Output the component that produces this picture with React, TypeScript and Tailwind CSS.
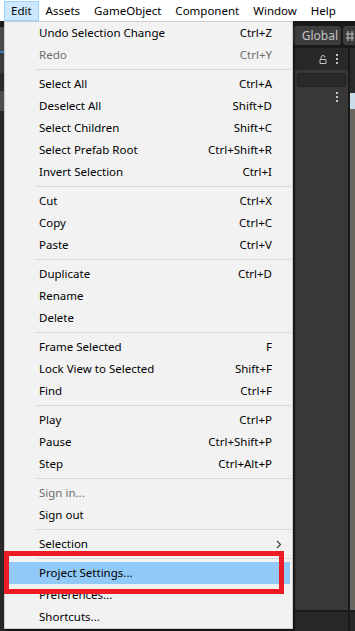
import React from "react";

type Item = { label: string; keys?: string; disabled?: boolean; sub?: boolean; active?: boolean };

const groups: Item[][] = [
  [
    { label: "Undo Selection Change", keys: "Ctrl+Z" },
    { label: "Redo", keys: "Ctrl+Y", disabled: true },
  ],
  [
    { label: "Select All", keys: "Ctrl+A" },
    { label: "Deselect All", keys: "Shift+D" },
    { label: "Select Children", keys: "Shift+C" },
    { label: "Select Prefab Root", keys: "Ctrl+Shift+R" },
    { label: "Invert Selection", keys: "Ctrl+I" },
  ],
  [
    { label: "Cut", keys: "Ctrl+X" },
    { label: "Copy", keys: "Ctrl+C" },
    { label: "Paste", keys: "Ctrl+V" },
  ],
  [
    { label: "Duplicate", keys: "Ctrl+D" },
    { label: "Rename" },
    { label: "Delete" },
  ],
  [
    { label: "Frame Selected", keys: "F" },
    { label: "Lock View to Selected", keys: "Shift+F" },
    { label: "Find", keys: "Ctrl+F" },
  ],
  [
    { label: "Play", keys: "Ctrl+P" },
    { label: "Pause", keys: "Ctrl+Shift+P" },
    { label: "Step", keys: "Ctrl+Alt+P" },
  ],
  [{ label: "Sign in...", disabled: true }, { label: "Sign out" }],
  [{ label: "Selection", sub: true }],
  [
    { label: "Project Settings...", active: true },
    { label: "Preferences..." },
    { label: "Shortcuts..." },
  ],
];

const menus = ["Edit", "Assets", "GameObject", "Component", "Window", "Help"];

function Row({ item }: { item: Item }) {
  return (
    <div
      className={`mx-[2px] flex h-[22px] items-center pl-[32px] pr-[18px] ${
        item.active ? "bg-[#91c9f7]" : ""
      } ${item.disabled ? "text-[#6d6d6d]" : "text-[#000]"}`}
    >
      <span className="flex-1 whitespace-nowrap">{item.label}</span>
      {item.keys && <span className="whitespace-nowrap">{item.keys}</span>}
      {item.sub && (
        <svg width="6" height="9" viewBox="0 0 6 9" className="-mr-[10px]">
          <path d="M1 1l3.5 3.5L1 8" fill="none" stroke="#404040" strokeWidth="1.2" />
        </svg>
      )}
    </div>
  );
}

export default function App() {
  return (
    <div className="relative h-[631px] w-[355px] overflow-hidden bg-[#1e1e1e] font-['Noto_Sans',sans-serif] text-[11.5px] leading-none">
      {/* menu bar */}
      <div className="flex h-[21px] items-center bg-white pl-[4px] text-black">
        {menus.map((m, i) => (
          <div
            key={m}
            className={`flex h-[20px] items-center border px-[6px] ${
              i === 0 ? "border-[#99d1ff] bg-[#cce8ff]" : "border-transparent"
            }`}
          >
            <span>{m}</span>
          </div>
        ))}
      </div>

      {/* editor behind the menu */}
      <div className="flex h-[610px]">
        <div className="flex w-[4px] flex-col">
          <div className="h-[6px] bg-[#1b1b1b]" />
          <div className="h-[24px] bg-[#4a4a4a]" />
          <div className="h-[2px] bg-[#3a79bb]" />
          <div className="h-[20px] bg-[#3c3c3c]" />
          <div className="h-[18px] bg-[#2a2a2a]" />
          <div className="h-[20px] bg-[#4d4d4d]" />
          <div className="flex-1 bg-[#282828]" />
        </div>
        <div className="flex-1" />
        <div className="flex w-[62px] flex-col bg-[#191919]">
          <div className="flex h-[27px] items-end gap-[2px] pb-[3px]">
            <div className="flex h-[19px] w-[48px] items-center justify-end rounded-[3px] bg-[#3c3c3c] pr-[3px] text-[12px] text-[#c4c4c4]">
              Global
            </div>
            <div className="flex h-[19px] flex-1 items-center rounded-l-[3px] bg-[#3c3c3c] pl-[3px]">
              <svg width="8" height="10" viewBox="0 0 8 10">
                <path d="M2 0v10M6 0v10M0 3h8M0 7h8" stroke="#c4c4c4" strokeWidth="1" />
              </svg>
            </div>
          </div>
          <div className="flex flex-1">
            <div className="flex flex-1 flex-col border-l-[2px] border-[#232323] bg-[#383838]">
              <div className="flex h-[22px] items-center justify-end gap-[9px] bg-[#282828] pr-[10px]">
                <svg width="8" height="9" viewBox="0 0 8 9">
                  <path d="M2 4V2.5a2 2 0 014 0M1 4.5h6v4H1z" fill="none" stroke="#c4c4c4" strokeWidth="1" />
                </svg>
                <svg width="2" height="10" viewBox="0 0 2 10">
                  <rect x="0" y="0" width="2" height="2" fill="#c4c4c4" />
                  <rect x="0" y="4" width="2" height="2" fill="#c4c4c4" />
                  <rect x="0" y="8" width="2" height="2" fill="#c4c4c4" />
                </svg>
              </div>
              <div className="mx-[2px] mt-[3px] h-[14px] rounded-[3px] border border-[#212121] bg-[#2a2a2a]" />
              <div className="flex h-[20px] items-center justify-end pr-[10px]">
                <svg width="2" height="10" viewBox="0 0 2 10">
                  <rect x="0" y="0" width="2" height="2" fill="#c4c4c4" />
                  <rect x="0" y="4" width="2" height="2" fill="#c4c4c4" />
                  <rect x="0" y="8" width="2" height="2" fill="#c4c4c4" />
                </svg>
              </div>
              <div className="flex-1" />
              <div className="h-[21px] border-t-[2px] border-[#1c1c1c] bg-[#282828]" />
            </div>
            <div className="flex w-[7px] flex-col border-l-[2px] border-[#191919]">
              <div className="h-[45px] bg-[#2a2a2a]" />
              <div className="h-[16px] bg-[#c9dcea]" />
              <div className="flex-1 bg-[#6c6660]" />
              <div className="h-[21px] border-t-[2px] border-[#1c1c1c] bg-[#282828]" />
            </div>
          </div>
        </div>
      </div>

      {/* dropdown */}
      <div className="absolute left-[4px] top-[21px] w-[289px] border border-[#cccccc] bg-[#f2f2f2] shadow-[2px_2px_2px_rgba(0,0,0,0.35)]">
        {groups.map((g, gi) => (
          <div key={gi}>
            {gi > 0 && <div className="my-[3px] ml-[31px] mr-[1px] h-px bg-[#d7d7d7]" />}
            {g.map((it) => (
              <Row key={it.label} item={it} />
            ))}
          </div>
        ))}
      </div>

      {/* red annotation box */}
      <div className="pointer-events-none absolute left-[4px] top-[551px] h-[43px] w-[280px] border-[5px] border-[#ed1c24]" />
    </div>
  );
}
